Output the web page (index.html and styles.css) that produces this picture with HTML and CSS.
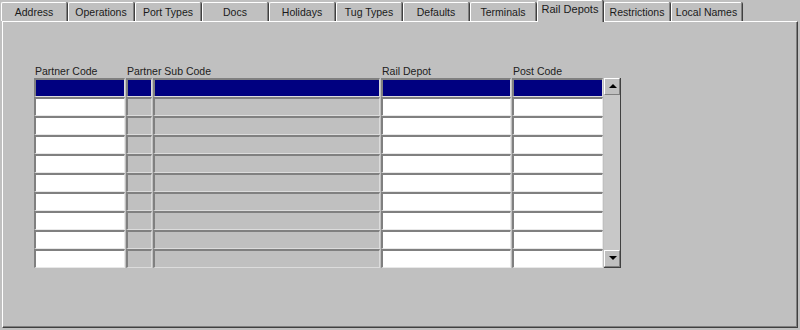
FILE: index.html
```html
<!DOCTYPE html>
<html lang="en">
<head>
    <meta charset="UTF-8">
    <title>Partner - Rail Depots</title>
    <link rel="stylesheet" href="styles.css">
</head>
<body>
    <div class="tabs">
        <div class="tab">Address</div>
        <div class="tab">Operations</div>
        <div class="tab">Port Types</div>
        <div class="tab">Docs</div>
        <div class="tab">Holidays</div>
        <div class="tab">Tug Types</div>
        <div class="tab">Defaults</div>
        <div class="tab">Terminals</div>
        <div class="tab active">Rail Depots</div>
        <div class="tab">Restrictions</div>
        <div class="tab wide">Local Names</div>
    </div>

    <div class="panel">
        <div class="grid">
            <div class="head">Partner Code</div>
            <div class="head">Partner Sub Code</div>
            <div class="head"></div>
            <div class="head">Rail Depot</div>
            <div class="head">Post Code</div>
            <div class="head"></div>
        </div>
        <div class="grid rows" id="rows">
            <div class="scroll">
                <div class="arrow up"></div>
                <div class="track"></div>
                <div class="arrow down"></div>
            </div>
        </div>
    </div>

    <script>
        // build the 10 record rows
        var rows = document.getElementById('rows');
        var kinds = ['field', 'field off', 'field off', 'field', 'field'];
        for (var r = 0; r < 10; r++) {
            for (var c = 0; c < kinds.length; c++) {
                var cell = document.createElement('div');
                cell.className = r === 0 ? 'field sel' : kinds[c];
                rows.appendChild(cell);
            }
        }
    </script>
</body>
</html>
```
FILE: styles.css
```css
body {
    margin: 0;
    background: #c0c0c0;
    font-family: "Liberation Sans", Arial, sans-serif;
    font-size: 10.5px;
    color: #000;
    width: 800px;
    height: 330px;
    overflow: hidden;
}

.tabs {
    display: flex;
    align-items: flex-end;
    height: 21px;
    padding-left: 1px;
    position: relative;
    z-index: 1;
}

.tab {
    width: 64px;
    height: 18px;
    line-height: 19px;
    text-align: center;
    color: #1a1a1a;
    border-top: 1px solid #fff;
    border-left: 1px solid #fff;
    border-right: 1px solid #808080;
    box-shadow: 1px 0 0 #404040;
    margin-right: 1px;
    border-radius: 2px 2px 0 0;
}

.tab.active {
    height: 21px;
    line-height: 17px;
    margin-bottom: -1px;
    background: #c0c0c0;
    font-size: 11px;
}

.tab.wide {
    width: 69px;
}

.panel {
    margin: 0 2px;
    height: 307px;
    box-sizing: border-box;
    border: 1px solid;
    border-color: #fff #404040 #404040 #fff;
    box-shadow: inset -1px -1px 0 #808080;
    padding: 42px 0 0 31px;
}

.grid {
    display: grid;
    grid-template-columns: 92px 27px 228px 131px 92px 17px;
}

.head {
    height: 14px;
    line-height: 14px;
    padding-left: 1px;
    white-space: nowrap;
    color: #202020;
}

.rows {
    grid-template-rows: repeat(10, 19px);
}

.field {
    background: #fff;
    border-top: 2px solid #808080;
    border-left: 2px solid #808080;
    border-bottom: 1px solid #e8e8e8;
    border-right: 1px solid #e8e8e8;
    margin-right: 1px;
}

.field.off {
    background: #c0c0c0;
    border-bottom-color: #dcdcdc;
    border-right-color: #dcdcdc;
}

.field.sel {
    background: #000080;
    border-bottom-color: #dcdcdc;
    border-right-color: #dcdcdc;
}

.scroll {
    grid-column: 6;
    grid-row: 1 / 11;
    display: flex;
    flex-direction: column;
    border-right: 1px solid #404040;
    border-bottom: 1px solid #404040;
    background: #c8c8c8;
}

.track {
    flex: 1;
}

.arrow {
    height: 15px;
    background: #c0c0c0;
    border-top: 1px solid #fff;
    border-left: 1px solid #fff;
    border-right: 1px solid #808080;
    border-bottom: 1px solid #808080;
    position: relative;
}

.arrow::after {
    content: "";
    position: absolute;
    left: 4px;
    top: 5px;
    border-left: 4px solid transparent;
    border-right: 4px solid transparent;
}

.arrow.up::after {
    border-bottom: 4px solid #000;
}

.arrow.down::after {
    border-top: 4px solid #000;
}
```
